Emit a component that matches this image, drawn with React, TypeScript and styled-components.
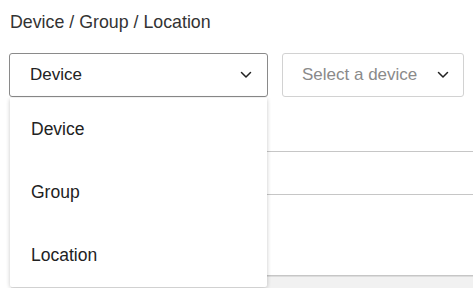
import React from "react";
import styled, { createGlobalStyle } from "styled-components";

const Global = createGlobalStyle`
  html, body { margin: 0; padding: 0; background: #ffffff; }
  body { font-family: "Liberation Sans", Arial, Helvetica, sans-serif; color: #222; }
`;

const Page = styled.div`
  width: 473px;
  height: 288px;
  overflow: hidden;
  padding: 12px 9px 0 9px;
  box-sizing: border-box;
`;

const Label = styled.div`
  font-size: 17.8px;
  line-height: 20px;
  color: #333;
  margin-left: 1px;
  margin-bottom: 21px;
`;

const SelectRow = styled.div`
  display: grid;
  grid-template-columns: 259px 182px;
  column-gap: 14px;
`;

const Field = styled.div`
  position: relative;
`;

const SelectBox = styled.div<{ $placeholder?: boolean; $padLeft: number; $padRight: number }>`
  height: 44px;
  box-sizing: border-box;
  border: 1px solid ${(p) => (p.$placeholder ? "#d2d2d2" : "#8a8a8a")};
  border-radius: 3px;
  display: flex;
  align-items: center;
  justify-content: space-between;
  padding: 0 ${(p) => p.$padRight}px 0 ${(p) => p.$padLeft}px;
  font-size: 17px;
  color: ${(p) => (p.$placeholder ? "#8a8a8a" : "#222")};
  background: #fff;
`;

const Menu = styled.div`
  position: absolute;
  top: 45px;
  left: 1px;
  width: 257px;
  background: #fff;
  box-shadow: 0 1px 4px rgba(0, 0, 0, 0.22);
  border-radius: 0 0 2px 2px;
  z-index: 10;
`;

const MenuItem = styled.div`
  height: 63px;
  display: flex;
  align-items: center;
  padding-left: 21px;
  font-size: 17.5px;
  color: #222;
`;

const Table = styled.div`
  margin: 10px -9px 0 2px;
  display: flex;
  flex-direction: column;
`;

const TableRow = styled.div<{ $h: number }>`
  height: ${(p) => p.$h}px;
  border-bottom: 1px solid #c6c6c6;
`;

const Footer = styled.div`
  height: 20px;
  background: #f1f1f1;
  border-top: 1px solid #dcdcdc;
`;

const Chevron = () => (
  <svg width="12" height="8" viewBox="0 0 12 8" fill="none">
    <polyline points="1.5,1.5 6,6 10.5,1.5" stroke="#222" strokeWidth="1.5" strokeLinecap="round" strokeLinejoin="round" />
  </svg>
);

export default function App() {
  return (
    <>
      <Global />
      <Page>
        <Label>Device / Group / Location</Label>
        <SelectRow>
          <Field>
            <SelectBox $padLeft={20} $padRight={15}>
              <span>Device</span>
              <Chevron />
            </SelectBox>
            <Menu>
              <MenuItem>Device</MenuItem>
              <MenuItem>Group</MenuItem>
              <MenuItem>Location</MenuItem>
            </Menu>
          </Field>
          <Field>
            <SelectBox $placeholder $padLeft={19} $padRight={14}>
              <span>Select a device</span>
              <Chevron />
            </SelectBox>
          </Field>
        </SelectRow>
        <Table>
          <TableRow $h={44} />
          <TableRow $h={42} />
          <TableRow $h={80} />
          <Footer />
        </Table>
      </Page>
    </>
  );
}
